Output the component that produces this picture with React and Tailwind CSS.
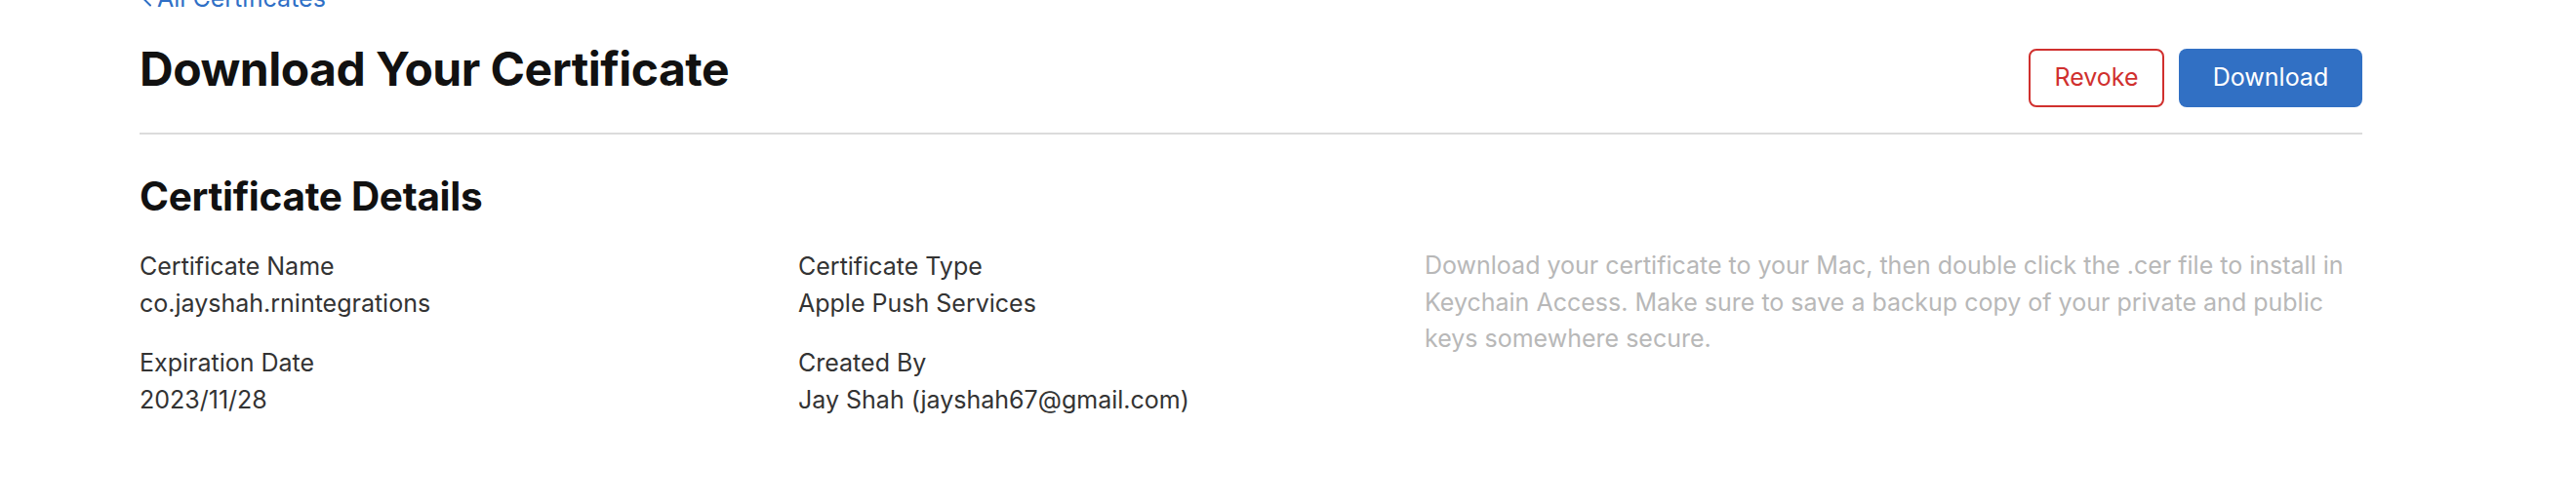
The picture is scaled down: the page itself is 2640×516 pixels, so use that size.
import React from "react";

export default function App() {
  return (
    <div
      className="w-[2640px] h-[516px] overflow-hidden bg-white"
      style={{ fontFamily: "Inter, 'Noto Sans', sans-serif" }}
    >
      <div className="pl-[143px] pr-[219px]">
        <a className="flex items-end -mt-[21px] text-[25px] leading-[38px] text-[#2f6fc6]">
          <svg
            width="12"
            height="19"
            viewBox="0 0 12 19"
            className="mb-[10px] mr-[5px] ml-[1px]"
            fill="none"
            stroke="#2f6fc6"
            strokeWidth="2"
            strokeLinecap="round"
            strokeLinejoin="round"
          >
            <path d="M10 1.5 L2 9.5 L10 17.5" />
          </svg>
          <span>All Certificates</span>
        </a>
        <div className="mt-[25px] flex items-start justify-between">
          <h1 className="text-[48px] leading-[58px] font-bold text-[#111111] tracking-[-0.5px]">
            Download Your Certificate
          </h1>
          <div className="mt-[8px] flex gap-[15px]">
            <button className="h-[60px] w-[139px] rounded-[8px] border-2 border-[#d0302e] text-[25px] text-[#d0302e]">
              Revoke
            </button>
            <button className="h-[60px] w-[188px] rounded-[8px] bg-[#3170c4] text-[25px] text-white">
              Download
            </button>
          </div>
        </div>
        <div className="mt-[26px] h-[2px] bg-[#dcdcdc]" />
        <h2 className="mt-[39px] text-[40.5px] leading-[50px] font-bold text-[#111111] tracking-[-0.3px]">
          Certificate Details
        </h2>
        <div className="mt-[27px] grid grid-cols-[675px_642px_1fr] text-[25px] leading-[38px] text-[#333333]">
          <div className="flex flex-col gap-[23px]">
            <div>
              <div>Certificate Name</div>
              <div>co.jayshah.rnintegrations</div>
            </div>
            <div>
              <div>Expiration Date</div>
              <div>2023/11/28</div>
            </div>
          </div>
          <div className="flex flex-col gap-[23px]">
            <div>
              <div>Certificate Type</div>
              <div>Apple Push Services</div>
            </div>
            <div>
              <div>Created By</div>
              <div>Jay Shah (jayshah67@gmail.com)</div>
            </div>
          </div>
          <p className="leading-[37.5px] text-[#b8b8b8]">
            Download your certificate to your Mac, then double click the .cer file to install in Keychain Access. Make sure to save a backup copy of your private and public keys somewhere secure.
          </p>
        </div>
      </div>
    </div>
  );
}
